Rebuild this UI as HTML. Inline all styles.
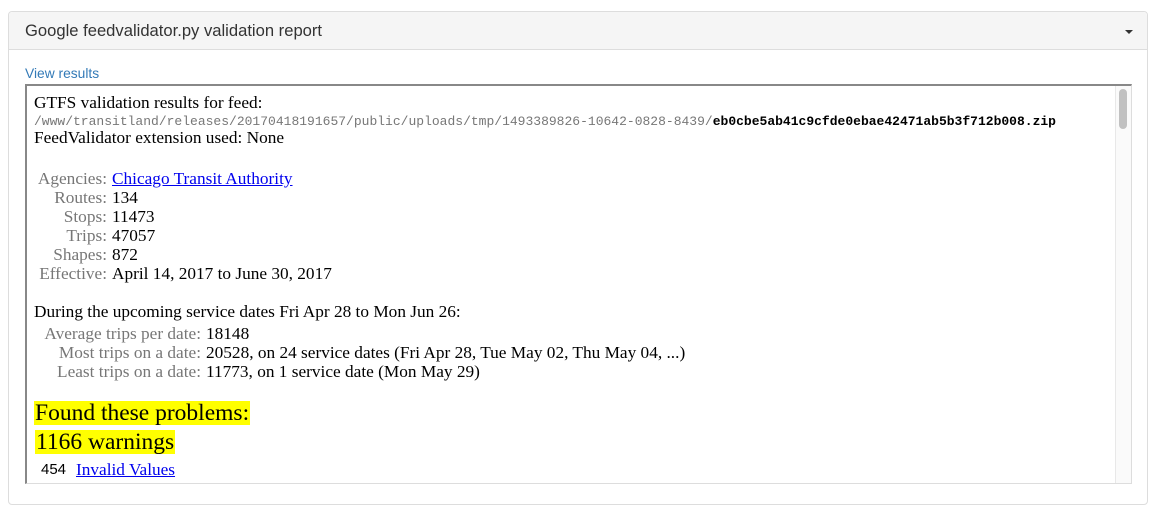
<!DOCTYPE html>
<html><head><style>
body{margin:0;background:#fff;width:1163px;height:517px;overflow:hidden;position:relative;font-family:"Liberation Sans",sans-serif}
.panel{position:absolute;left:8px;top:11px;width:1138px;height:492px;border:1px solid #ddd;border-radius:4px}
.hd{height:37px;background:#f5f5f5;border-bottom:1px solid #ddd;border-radius:4px 4px 0 0}
.hd span{position:absolute;left:16px;top:9px;font-size:16.6px;color:#333}
.caret{position:absolute;right:14px;top:18px;width:0;height:0;border-left:4px solid transparent;border-right:4px solid transparent;border-top:4px solid #333}
.vr{position:absolute;left:25px;top:66px;font-size:13.8px;color:#337ab7}
.frame{position:absolute;left:25px;top:84px;width:1104px;height:397px;border-top:2px solid #888;border-left:2px solid #888;border-right:1px solid #ddd;border-bottom:1px solid #ddd;overflow:hidden;font-family:"Liberation Serif",serif;font-size:17.3px;color:#000}
.sb{position:absolute;right:0;top:0;width:15px;height:100%;background:#fafafa;border-left:1px solid #e8e8e8}
.th{position:absolute;left:3px;top:3px;width:8px;height:40px;background:#c1c1c1;border-radius:4px}
.l{position:absolute;white-space:nowrap;line-height:20px}
.g{color:#777;text-align:right}
a{color:#00e;text-decoration:underline}
.m{font-family:"Liberation Mono",monospace;font-size:13px;color:#777}
.m b{color:#000}
.hl{background:#ff0;font-size:23.5px;line-height:24px;padding:0 1px}
</style></head><body>
<div class="panel"><div class="hd"><span>Google feedvalidator.py validation report</span><div class="caret"></div></div></div>
<div class="vr">View results</div>
<div class="frame">
<div class="sb"><div class="th"></div></div>
<div class="l" style="left:7px;top:7px">GTFS validation results for feed:</div>
<div class="l m" style="left:7px;top:26px">/www/transitland/releases/20170418191657/public/uploads/tmp/1493389826-10642-0828-8439/<b>eb0cbe5ab41c9cfde0ebae42471ab5b3f712b008.zip</b></div>
<div class="l" style="left:7px;top:42px">FeedValidator extension used: None</div>
<div class="l g" style="left:0;width:80px;top:83px">Agencies:</div><div class="l" style="left:85px;top:83px"><a>Chicago Transit Authority</a></div>
<div class="l g" style="left:0;width:80px;top:102px">Routes:</div><div class="l" style="left:85px;top:102px">134</div>
<div class="l g" style="left:0;width:80px;top:121px">Stops:</div><div class="l" style="left:85px;top:121px">11473</div>
<div class="l g" style="left:0;width:80px;top:140px">Trips:</div><div class="l" style="left:85px;top:140px">47057</div>
<div class="l g" style="left:0;width:80px;top:159px">Shapes:</div><div class="l" style="left:85px;top:159px">872</div>
<div class="l g" style="left:0;width:80px;top:178px">Effective:</div><div class="l" style="left:85px;top:178px">April 14, 2017 to June 30, 2017</div>
<div class="l" style="left:7px;top:216px">During the upcoming service dates Fri Apr 28 to Mon Jun 26:</div>
<div class="l g" style="left:0;width:174px;top:238px">Average trips per date:</div><div class="l" style="left:179px;top:238px">18148</div>
<div class="l g" style="left:0;width:174px;top:257px">Most trips on a date:</div><div class="l" style="left:179px;top:257px">20528, on 24 service dates (Fri Apr 28, Tue May 02, Thu May 04, ...)</div>
<div class="l g" style="left:0;width:174px;top:276px">Least trips on a date:</div><div class="l" style="left:179px;top:276px">11773, on 1 service date (Mon May 29)</div>
<div class="l hl" style="left:7px;top:315px">Found these problems:</div>
<div class="l hl" style="left:8px;top:344px">1166 warnings</div>
<div class="l" style="left:14px;top:374px;font-family:'Liberation Sans',sans-serif;font-size:15px">454</div>
<div class="l" style="left:49px;top:374px"><a>Invalid Values</a></div>
</div>
</body></html>
